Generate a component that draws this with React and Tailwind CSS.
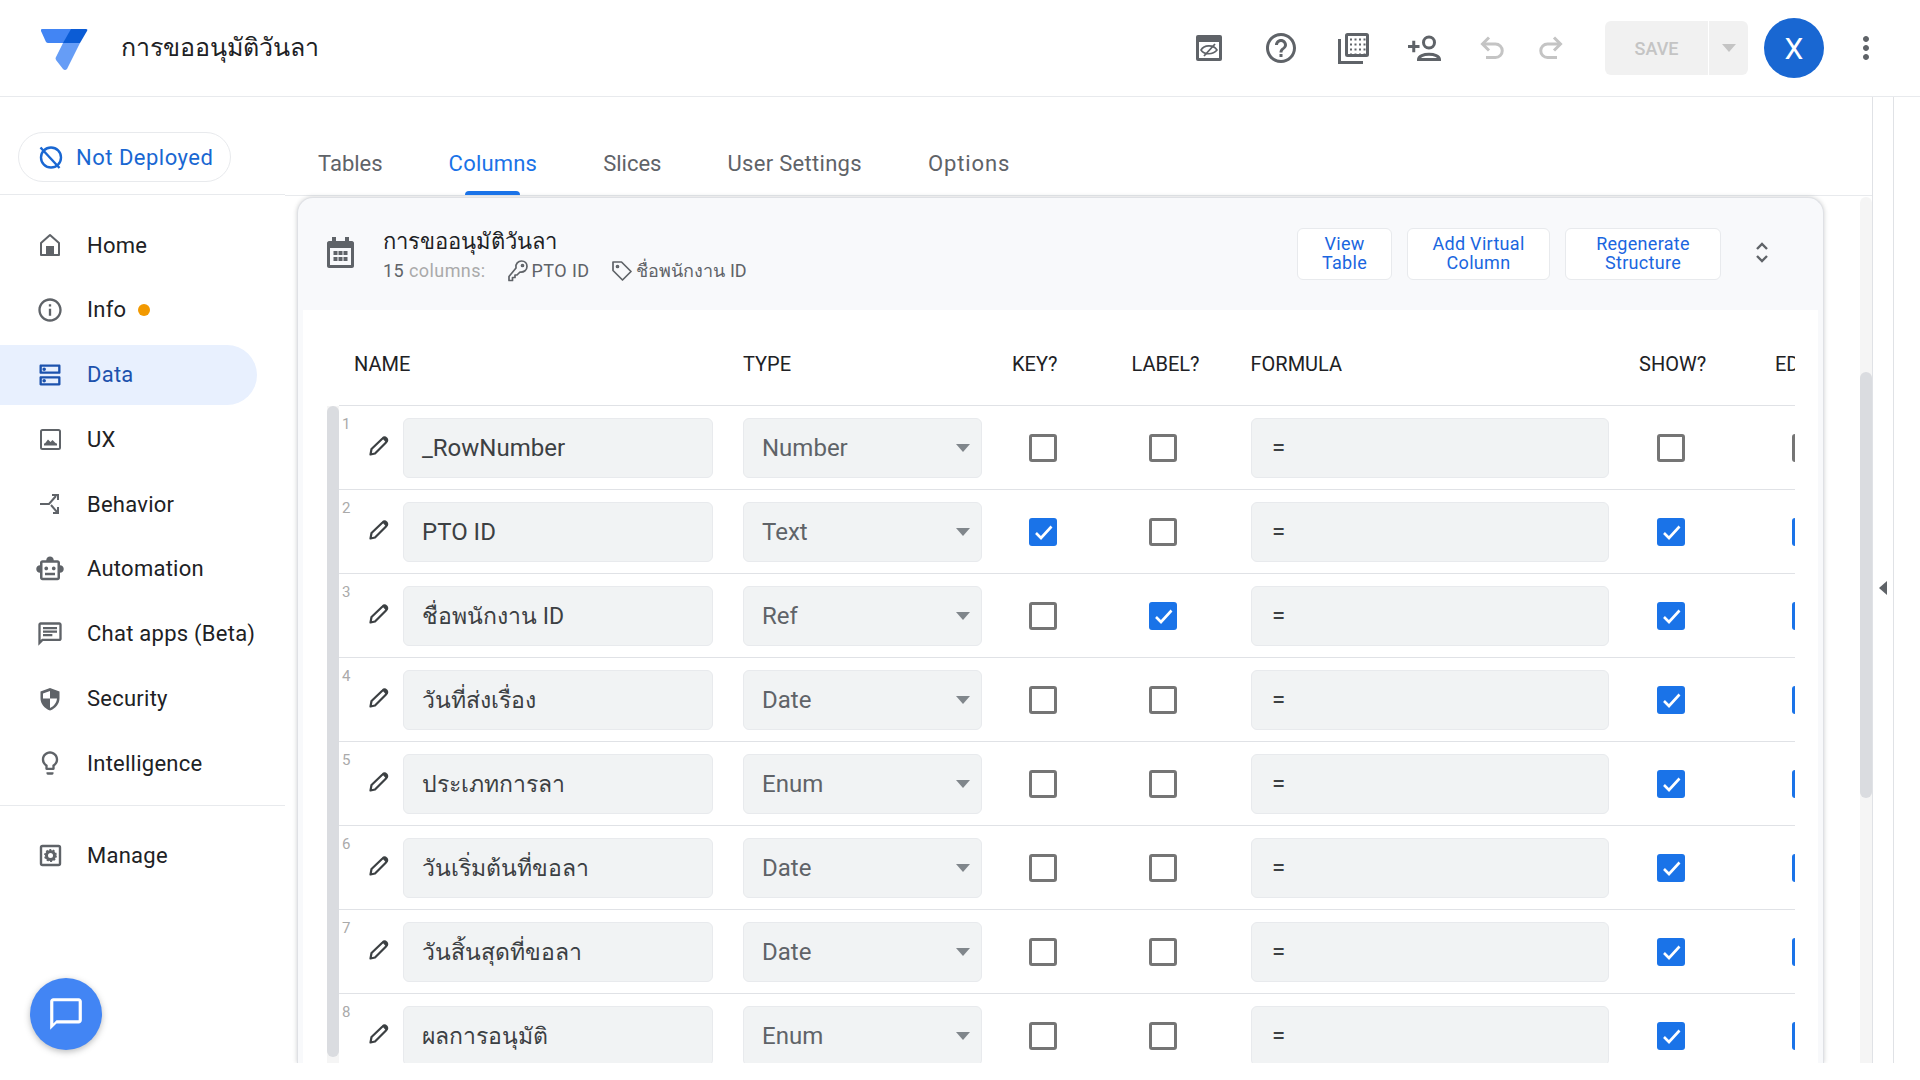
import React from "react";
import {
  MdInfoOutline, MdOutlineDns, MdOutlineSmartToy, MdOutlineChat, MdOutlineLightbulb,
  MdHelpOutline, MdMoreVert, MdOutlineChatBubbleOutline,
} from "react-icons/md";

const F = "[font-family:Roboto,'Noto_Sans',sans-serif]";

const Logo = () => (
  <svg width="48" height="43" viewBox="0 0 48 43">
    <path d="M2 1H32L24 15H8Q7 15 6 14L1 3Q0.5 1 2 1Z" fill="#4285f4" />
    <path d="M31 1H46Q48 1 47 3L40 15H23Z" fill="#0b5cd5" />
    <path d="M23 15H40L27 41Q25 43 23 41L16 32Q15 30 16 29Z" fill="#669df6" />
  </svg>
);

const HomeIcon = () => (
  <svg width="26" height="26" viewBox="0 0 26 26" fill="none">
    <path d="M4 23V11L13 3L22 11V23Z" stroke="#5f6368" strokeWidth="2" strokeLinejoin="round" />
    <rect x="9" y="14" width="8" height="9" fill="#5f6368" />
  </svg>
);
const ImgIcon = () => (
  <svg width="26" height="26" viewBox="0 0 26 26" fill="none">
    <rect x="4" y="4" width="19" height="19" rx="1.5" stroke="#5f6368" strokeWidth="2" />
    <rect x="7" y="17.5" width="13" height="2" fill="#5f6368" />
    <path d="M7.5 18L11 13.5L13.5 16L15.5 14L19.5 18Z" fill="#5f6368" />
  </svg>
);
const BehaviorIcon = () => (
  <svg width="26" height="26" viewBox="0 0 26 26" fill="none" stroke="#5f6368" strokeWidth="2">
    <path d="M3 13H12L19 5" />
    <path d="M15 4H21V9" />
    <path d="M14 14L20 21" />
    <path d="M21 16V22H16" />
  </svg>
);
const ShieldIcon = () => (
  <svg width="26" height="26" viewBox="0 0 26 26">
    <path d="M13 2L22.5 5.5V12C22.5 18 18.5 22.5 13 24.5C7.5 22.5 3.5 18 3.5 12V5.5Z" fill="#5f6368" />
    <path d="M13 5L6 7.5V12.5H13ZM13 12.5V22C16.8 20.4 19.5 17 20 12.5Z" fill="#fff" />
  </svg>
);
const ManageIcon = () => (
  <svg width="26" height="26" viewBox="0 0 26 26" fill="none">
    <rect x="4" y="4" width="19" height="19" rx="1.5" stroke="#5f6368" strokeWidth="2.4" />
    <circle cx="13.5" cy="13.5" r="4" fill="none" stroke="#5f6368" strokeWidth="3" />
    <circle cx="13.5" cy="13.5" r="5.6" fill="none" stroke="#5f6368" strokeWidth="1.6" strokeDasharray="2 1.5" />
  </svg>
);
const NotDeployed = () => (
  <svg width="25" height="25" viewBox="0 0 25 25" fill="none" stroke="#1967d2" strokeWidth="2.4">
    <circle cx="13" cy="12.5" r="10" />
    <path d="M2.5 2.5L21.5 23" />
  </svg>
);
const CalOff = () => (
  <svg width="26" height="26" viewBox="0 0 26 26" fill="none">
    <rect x="0" y="0" width="26" height="26" rx="2" fill="#5f6368" />
    <rect x="3" y="7" width="20" height="16" fill="#fff" />
    <path d="M5 15C8 10 17 9 21 15C17 20 8 20 5 15Z" stroke="#5f6368" strokeWidth="1.6" />
    <path d="M8 21L19 9" stroke="#5f6368" strokeWidth="1.8" />
  </svg>
);
const GridIcon = () => (
  <svg width="31" height="31" viewBox="0 0 31 31" fill="none">
    <path d="M1.5 6V29.5H25" stroke="#5f6368" strokeWidth="3" />
    <rect x="8.5" y="1.5" width="21" height="21" rx="1" stroke="#5f6368" strokeWidth="3" />
    <g fill="#5f6368">
      {[6, 11, 16, 21].map((y) =>
        [12, 16.5, 21, 25.5].map((x) => <rect key={x + "-" + y} x={x} y={y - 0.5} width="2" height="2" />)
      )}
    </g>
  </svg>
);
const PersonAdd = () => (
  <svg width="34" height="26" viewBox="0 0 34 26" fill="none" stroke="#5f6368" strokeWidth="3">
    <path d="M0 11.500H11.500M5.750 5.750V17.250" />
    <circle cx="21" cy="7.500" r="5.500" />
    <path d="M10.500 24.500C10.500 17.500 31.500 17.500 31.500 24.500Z" />
  </svg>
);
const Undo = ({ flip }) => (
  <svg width="24" height="24" viewBox="0 0 24 24" fill="none" stroke="#c4c4c4" strokeWidth="3" className={flip ? "-scale-x-100" : ""}>
    <path d="M9 1.500L2.500 8L9 14.500" />
    <path d="M3 8H15.500A6.500 6.500 0 0 1 15.500 21.500H6" />
  </svg>
);
const PanelCal = () => (
  <svg width="27" height="31" viewBox="0 0 27 31" className="shrink-0 mb-[3px]">
    <path d="M5 0H9V4H18V0H22V4H25C26 4 27 5 27 6V29C27 30 26 31 25 31H2C1 31 0 30 0 29V6C0 5 1 4 2 4H5Z" fill="#5f6368" />
    <rect x="3" y="11" width="21" height="17" fill="#f8f9fb" />
    <g fill="#5f6368">
      {[14, 20].map((y) =>
        [6.5, 11.5, 16.5].map((x) => <rect key={x + "-" + y} x={x} y={y} width="4" height="4" />)
      )}
    </g>
  </svg>
);
const KeyIcon = () => (
  <svg width="20" height="22" viewBox="0 0 20 22" fill="none" stroke="#5f6368" strokeWidth="1.7">
    <path d="M8 8C7 3.500 10.500 1 13.500 1C17 1 19 3.500 19 6.500C19 10 16 12.500 12 12L9 15H7V17.500H4.500V20.500H1V16.500Z" strokeLinejoin="round" />
    <circle cx="14.500" cy="5.500" r="1" />
  </svg>
);
const TagIcon = () => (
  <svg width="20" height="20" viewBox="0 0 20 20" fill="none" stroke="#5f6368" strokeWidth="1.7">
    <path d="M1 1H9.500L19 10.500L10.500 19L1 9.500Z" strokeLinejoin="round" />
    <circle cx="5.500" cy="5.500" r="1" />
  </svg>
);
const Pencil = () => (
  <svg width="20" height="20" viewBox="0 0 20 20" fill="none" className="mt-[-5px]">
    <path d="M1.500 18.500L2.500 13L13.500 2.500Q15.500 0.500 17.500 2.500Q19 4.500 17 6.500L6 17.500Z" stroke="#3c4043" strokeWidth="2.200" strokeLinejoin="round" />
    <path d="M13.500 2.500Q15.500 0.500 17.500 2.500Q19 4.500 17 6.500Z" fill="#3c4043" />
  </svg>
);
const Check = ({ on }) => (
  <div className={`shrink-0 w-[28px] h-[28px] rounded-[3px] flex items-center justify-center ${on ? "bg-[#1a73e8]" : "border-[3px] border-[#757575]"}`}>
    {on ? (
      <svg width="21" height="17" viewBox="0 0 21 17" fill="none">
        <path d="M3 9L8 14L18.500 2.500" stroke="#fff" strokeWidth="2.600" />
      </svg>
    ) : null}
  </div>
);

const nav = [
  ["Home", <HomeIcon />],
  ["Info", <MdInfoOutline size={28} color="#5f6368" />],
  ["Data", <MdOutlineDns size={28} color="#1c52ad" />],
  ["UX", <ImgIcon />],
  ["Behavior", <BehaviorIcon />],
  ["Automation", <MdOutlineSmartToy size={30} color="#5f6368" />],
  ["Chat apps (Beta)", <MdOutlineChat size={28} color="#5f6368" />],
  ["Security", <ShieldIcon />],
  ["Intelligence", <MdOutlineLightbulb size={28} color="#5f6368" />],
];

const rows = [
  ["_RowNumber", "Number", false, false, false],
  ["PTO ID", "Text", true, false, true],
  ["ชื่อพนักงาน ID", "Ref", false, true, true],
  ["วันที่ส่งเรื่อง", "Date", false, false, true],
  ["ประเภทการลา", "Enum", false, false, true],
  ["วันเริ่มต้นที่ขอลา", "Date", false, false, true],
  ["วันสิ้นสุดที่ขอลา", "Date", false, false, true],
  ["ผลการอนุมัติ", "Enum", false, false, true],
];

const NavItem = ({ label, icon, active, dot }) => (
  <div className={`flex items-center h-[60px] mb-[4.8px] w-[257px] rounded-r-[30px] ${active ? "bg-[#e8f0fe]" : ""}`}>
    <div className="w-[87px] shrink-0 flex justify-center pl-[13px]">{icon}</div>
    <span className={`text-[22px] tracking-[0.25px] ${active ? "text-[#1c52ad]" : "text-[#202124]"} whitespace-nowrap`}>{label}</span>
    {dot && <span className="ml-[12px] w-[12px] h-[12px] rounded-full bg-[#f29900]" />}
  </div>
);

const Btn = ({ a, b, w }) => (
  <div className={`${w} h-[52px] bg-white border border-[#e8eaed] rounded-[6px] flex flex-col items-center justify-center pb-[2px] text-[18px] leading-[19px] tracking-[0.3px] text-[#1a66e0]`}>
    <span>{a}</span>
    <span>{b}</span>
  </div>
);

const Tab = ({ t, on, s }) => (
  <div className={`relative h-full flex items-center pb-[3px] text-[22px] ${s || ""} ${on ? "text-[#1a73e8]" : "text-[#5f6368]"}`}>
    {t}
    {on && <span className="absolute bottom-0 left-[16px] right-[17px] h-[4px] bg-[#1a73e8] rounded-t-[4px]" />}
  </div>
);

const Head = ({ w, t }) => <div className={`${w} shrink-0`}>{t}</div>;

export default function App() {
  return (
    <div className={`${F} w-[1920px] h-[1063px] overflow-hidden bg-white flex flex-col`}>
      <header className="h-[97px] shrink-0 border-b border-[#e8eaed] flex items-center">
        <div className="ml-[40px] mt-[2px]"><Logo /></div>
        <div className="ml-[33px] text-[25px] text-[#202124] whitespace-nowrap">การขออนุมัติวันลา</div>
        <div className="ml-auto flex items-center">
          <CalOff />
          <div className="ml-[41px]"><MdHelpOutline size={36} color="#5f6368" /></div>
          <div className="ml-[39px]"><GridIcon /></div>
          <div className="ml-[39px]"><PersonAdd /></div>
          <div className="ml-[38px]"><Undo /></div>
          <div className="ml-[35px]"><Undo flip /></div>
          <div className="ml-[42px] w-[143px] h-[54px] rounded-[6px] bg-[#f1f1f1] flex">
            <div className="w-[104px] border-r border-white flex items-center justify-center text-[18px] font-medium text-[#c4c4c4]">SAVE</div>
            <div className="flex-1 flex items-center justify-center">
              <div className="w-0 h-0 border-x-[7px] border-x-transparent border-t-[8px] border-t-[#c4c4c4]" />
            </div>
          </div>
          <div className="ml-[16px] w-[60px] h-[60px] rounded-full bg-[#1967d2] flex items-center justify-center text-white text-[30px]">X</div>
          <div className="ml-[24px] mr-[36px] w-[36px] flex justify-center"><MdMoreVert size={36} color="#5f6368" className="shrink-0" /></div>
        </div>
      </header>

      <div className="flex-1 flex min-h-0 relative">
        <aside className="w-[285px] shrink-0 flex flex-col">
          <div className="h-[98px] shrink-0 border-b border-[#e8eaed] pl-[18px] pt-[35px]">
            <div className="w-[213px] h-[50px] rounded-full border border-[#e8eaed] flex items-center pl-[19px] text-[22px] tracking-[0.5px] text-[#1967d2]">
              <NotDeployed />
              <span className="ml-[13px]">Not Deployed</span>
            </div>
          </div>
          <nav className="pt-[20px]">
            {nav.map(([l, i]) => (
              <NavItem key={l} label={l} icon={i} active={l === "Data"} dot={l === "Info"} />
            ))}
          </nav>
          <div className="mt-[7px] border-t border-[#e8eaed] pt-[19px]">
            <NavItem label="Manage" icon={<ManageIcon />} />
          </div>
        </aside>

        <main className="w-[1588px] shrink-0 flex flex-col min-h-0 border-r border-[#e0e2e6]">
          <div className="h-[99px] shrink-0 border-b border-[#e8eaed] flex items-end">
            <div className="flex gap-[66px] pl-[33px] h-[60px]">
              <Tab t="Tables" />
              <Tab t="Columns" on s="tracking-[0.2px]" />
              <Tab t="Slices" />
              <Tab t="User Settings" s="tracking-[0.3px]" />
              <Tab t="Options" s="tracking-[0.9px]" />
            </div>
          </div>
          <div className="flex-1 min-h-0 flex">
            <section className="ml-[12px] mt-[1px] w-[1527px] shrink-0 rounded-t-[16px] bg-[#f8f9fb] border border-b-0 border-[#dfe1e5] shadow-[0_0_4px_rgba(60,64,67,0.25)] flex flex-col min-h-0">
              <div className="h-[112px] shrink-0 flex items-center pl-[29px]">
                <PanelCal />
                <div className="ml-[29px] mt-[3px]">
                  <div className="text-[22px] leading-[30px] text-[#202124] whitespace-nowrap">การขออนุมัติวันลา</div>
                  <div className="mt-[1px] flex items-center text-[18px] leading-[26px] text-[#5f6368] whitespace-nowrap tracking-[0.4px]">
                    <span>15</span>
                    <span className="ml-[5px] text-[#aaaaaa]">columns:</span>
                    <span className="ml-[22px]"><KeyIcon /></span>
                    <span className="ml-[4px]">PTO ID</span>
                    <span className="ml-[23px]"><TagIcon /></span>
                    <span className="ml-[4px] tracking-normal">ชื่อพนักงาน ID</span>
                  </div>
                </div>
                <div className="ml-auto flex items-center gap-[15px]">
                  <Btn a="View" b="Table" w="w-[95px]" />
                  <Btn a="Add Virtual" b="Column" w="w-[143px]" />
                  <Btn a="Regenerate" b="Structure" w="w-[156px]" />
                  <svg width="14" height="21" viewBox="0 0 14 21" fill="none" stroke="#5f6368" strokeWidth="2.400" className="ml-[19px] mr-[54px] mb-[4px]">
                    <path d="M2 7L7 2L12 7" />
                    <path d="M2 14L7 19L12 14" />
                  </svg>
                </div>
              </div>
              <div className="flex-1 min-h-0 mx-[5px] bg-white pl-[24px] overflow-hidden">
                <div className="ml-[12px] w-[1456px] h-[96px] border-b border-[#e0e2e6] flex items-center pl-[15px] pt-[13px] text-[20px] text-[#202124] overflow-hidden whitespace-nowrap">
                  <Head w="w-[389px]" t="NAME" />
                  <Head w="w-[269px]" t="TYPE" />
                  <Head w="w-[119.500px]" t="KEY?" />
                  <Head w="w-[119px]" t="LABEL?" />
                  <Head w="w-[388.500px]" t="FORMULA" />
                  <Head w="w-[136px]" t="SHOW?" />
                  <Head w="w-[30px]" t="ED" />
                </div>
                <div className="flex h-[700px]">
                  <div className="w-[12px] shrink-0 bg-[#f5f5f5] h-full">
                    <div className="h-[651px] rounded-full bg-[#dadce0]" />
                  </div>
                  <div className="w-[1456px] shrink-0 overflow-hidden">
                    {rows.map(([n, t, k, l, s], i) => (
                      <div key={i} className="h-[84px] shrink-0 pt-[1px] border-b border-[#e0e2e6] flex items-center">
                        <div className="w-[30px] shrink-0 self-start pt-[6px] pl-[3px] text-[15px] text-[#aaaaaa]">{i + 1}</div>
                        <div className="w-[34px] shrink-0"><Pencil /></div>
                        <div className={`w-[310px] shrink-0 h-[60px] rounded-[6px] bg-[#f1f3f4] border border-[#e8eaed] flex items-center pl-[18px] ${/^[_A-Z]/.test(n) ? "text-[24px]" : "text-[23px] pt-[2px]"} text-[#3c4043] whitespace-nowrap`}>{n}</div>
                        <div className="ml-[30px] w-[239px] shrink-0 h-[60px] rounded-[6px] bg-[#f1f3f4] border border-[#e8eaed] flex items-center justify-between pl-[18px] pr-[11px] text-[24px] text-[#5f6368]">
                          <span>{t}</span>
                          <span className="w-0 h-0 border-x-[7px] border-x-transparent border-t-[8px] border-t-[#80868b]" />
                        </div>
                        <div className="ml-[47px]"><Check on={k} /></div>
                        <div className="ml-[92px]"><Check on={l} /></div>
                        <div className="ml-[74px] w-[358px] shrink-0 h-[60px] rounded-[6px] bg-[#f1f3f4] border border-[#e8eaed] flex items-center pl-[20px] text-[24px] text-[#3c4043]">=</div>
                        <div className="ml-[48px]"><Check on={s} /></div>
                        <div className="ml-[107px]"><Check on={s} /></div>
                      </div>
                    ))}
                  </div>
                </div>
              </div>
            </section>
            <div className="ml-[36px] w-[12px] shrink-0 mt-[1px] bg-[#f5f5f5] rounded-t-full">
              <div className="mt-[175px] h-[426px] rounded-full bg-[#dadce0]" />
            </div>
          </div>
        </main>

        <div className="w-[21px] shrink-0 border-r border-[#e0e2e6] flex items-center justify-center">
          <div className="mt-[16px] w-0 h-0 border-y-[7px] border-y-transparent border-r-[8px] border-r-[#5f6368]" />
        </div>

        <button className="absolute left-[30px] top-[881px] w-[72px] h-[72px] rounded-full bg-[#4285f4] shadow-[0_2px_6px_rgba(60,64,67,0.35)] flex items-center justify-center">
          <MdOutlineChatBubbleOutline size={38} color="#fff" />
        </button>
      </div>
    </div>
  );
}
